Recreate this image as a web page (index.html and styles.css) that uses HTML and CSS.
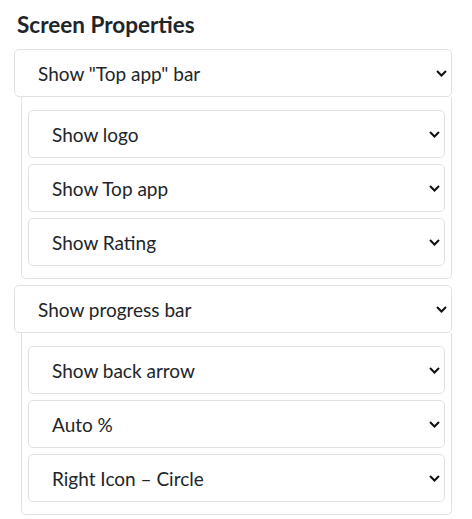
FILE: index.html
```html
<!DOCTYPE html>
<html lang="en">
<head>
    <meta charset="UTF-8">
    <meta name="viewport" content="width=device-width, initial-scale=1.0">
    <title>Screen Properties</title>
    <link rel="stylesheet" href="styles.css">
</head>
<body>
    <h2 class="panel-title">Screen Properties</h2>

    <div class="group">
        <div class="select main">
            <span>Show "Top app" bar</span>
            <svg class="chevron" viewBox="0 0 11 7"><path d="M1 1l4.5 4.5 4.5-4.5"/></svg>
        </div>
        <div class="sub-list">
            <div class="select">
                <span>Show logo</span>
                <svg class="chevron" viewBox="0 0 11 7"><path d="M1 1l4.5 4.5 4.5-4.5"/></svg>
            </div>
            <div class="select">
                <span>Show Top app</span>
                <svg class="chevron" viewBox="0 0 11 7"><path d="M1 1l4.5 4.5 4.5-4.5"/></svg>
            </div>
            <div class="select">
                <span>Show Rating</span>
                <svg class="chevron" viewBox="0 0 11 7"><path d="M1 1l4.5 4.5 4.5-4.5"/></svg>
            </div>
        </div>
    </div>

    <div class="group">
        <div class="select main">
            <span>Show progress bar</span>
            <svg class="chevron" viewBox="0 0 11 7"><path d="M1 1l4.5 4.5 4.5-4.5"/></svg>
        </div>
        <div class="sub-list">
            <div class="select">
                <span>Show back arrow</span>
                <svg class="chevron" viewBox="0 0 11 7"><path d="M1 1l4.5 4.5 4.5-4.5"/></svg>
            </div>
            <div class="select">
                <span>Auto %</span>
                <svg class="chevron" viewBox="0 0 11 7"><path d="M1 1l4.5 4.5 4.5-4.5"/></svg>
            </div>
            <div class="select">
                <span>Right Icon – Circle</span>
                <svg class="chevron" viewBox="0 0 11 7"><path d="M1 1l4.5 4.5 4.5-4.5"/></svg>
            </div>
        </div>
    </div>
</body>
</html>
```

FILE: styles.css
```css
body {
    margin: 0;
    padding: 12px 20px 0 14px;
    font-family: Lato, "Noto Sans", sans-serif;
    color: #212529;
    background-color: white;
}

.panel-title {
    margin: 0 0 11px 3px;
    font-size: 22.5px;
    font-weight: bold;
    line-height: 26px;
}

.group {
    margin-bottom: 6px;
}

.select {
    display: flex;
    align-items: center;
    justify-content: space-between;
    height: 46px;
    padding: 0 4px 0 23px;
    border: 1px solid #dee2e6;
    border-radius: 5px;
    background-color: white;
    font-size: 19px;
}

.sub-list {
    display: flex;
    flex-direction: column;
    gap: 6px;
    margin-left: 7px;
    padding: 13px 6px 12px 6px;
    border: 1px solid #dee2e6;
    border-top: none;
    border-radius: 0 0 5px 5px;
}

.chevron {
    width: 11px;
    height: 7px;
    fill: none;
    stroke: #111;
    stroke-width: 2;
}
```
